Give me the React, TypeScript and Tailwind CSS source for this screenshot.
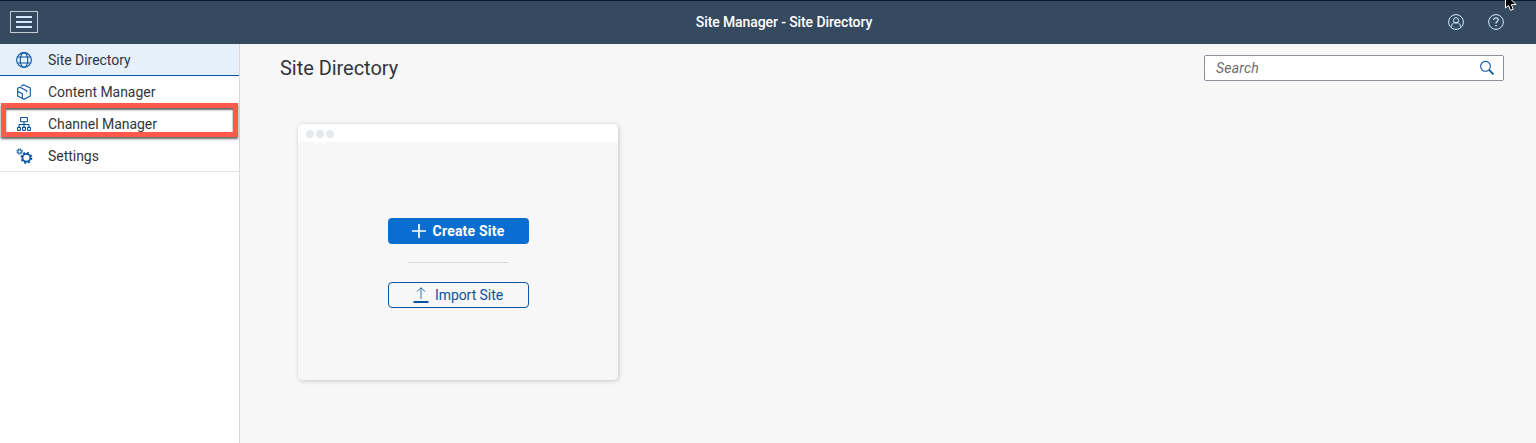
import type { ReactNode } from 'react';

function Globe() {
  return (
    <svg width="16" height="16" viewBox="0 0 16 16" fill="none" stroke="#0854a0" strokeWidth="1.1">
      <circle cx="8" cy="8" r="7.4" />
      <ellipse cx="8" cy="8" rx="3.8" ry="7.4" />
      <path d="M1.4 5h13.2M1.4 11h13.2" />
    </svg>
  );
}

function Cube() {
  return (
    <svg width="16" height="16" viewBox="0 0 16 16" fill="none" stroke="#0854a0" strokeWidth="1.1" strokeLinejoin="round" strokeLinecap="round">
      <path d="M5.4 1.9L7.6.8l6.7 3.3v7.8L8 15.3l-6.3-3.4V4.3l2.2-1.1 6.9 3.6v1.2" />
      <path d="M1.9 7.4L6.3 9.7v4.4" />
    </svg>
  );
}

function Hierarchy() {
  return (
    <svg width="16" height="16" viewBox="0 0 16 16" fill="none" stroke="#0854a0" strokeWidth="1.1">
      <rect x="4.6" y="1.5" width="6.8" height="4.2" rx=".5" />
      <path d="M8 5.7v5.6M3.1 11.3V8.5h9.8v2.8" />
      <rect x="1.5" y="11.4" width="3" height="3" rx=".6" />
      <rect x="6.5" y="11.4" width="3" height="3" rx=".6" />
      <rect x="11.5" y="11.4" width="3" height="3" rx=".6" />
    </svg>
  );
}

function Gears() {
  return (
    <svg width="17" height="16" viewBox="0 0 17 16" fill="none" stroke="#0854a0">
      <circle cx="3.6" cy="3.5" r="1.8" strokeWidth="1.1" />
      <circle cx="3.6" cy="3.5" r="2.7" strokeWidth="1.1" strokeDasharray="1.06 1.06" />
      <circle cx="10.4" cy="9.8" r="3.9" strokeWidth="1.7" />
      <circle cx="10.4" cy="9.8" r="5.2" strokeWidth="1.5" strokeDasharray="2.04 2.04" />
    </svg>
  );
}

function NavItem({ icon, label, className = 'h-8' }: { icon: ReactNode; label: string; className?: string }) {
  return (
    <a className={`flex items-center pl-4 text-sm tracking-[-0.03px] text-[#32363a] ${className}`}>
      <span className="w-8 shrink-0">{icon}</span>
      <span>{label}</span>
    </a>
  );
}

export default function App() {
  return (
    <div className="relative flex h-[443px] w-[1536px] flex-col overflow-hidden bg-[#f7f7f7] font-[Roboto,'Noto_Sans',sans-serif]">
      <header className="flex h-11 shrink-0 items-center border-t border-[#061a38] bg-[#354a5f] pr-8 pb-0.5 pl-2.5">
        <button className="flex h-[22px] w-7 items-center justify-center border border-[#c3cbd3]">
          <svg width="16" height="12" viewBox="0 0 16 12" fill="#d1e8ff">
            <path d="M0 0h16v2H0zM0 5h16v2H0zM0 10h16v2H0z" />
          </svg>
        </button>
        <h1 className="ml-[82px] flex-1 text-center text-sm font-medium tracking-[-0.1px] text-white">Site Manager - Site Directory</h1>
        <div className="flex gap-6">
          <svg width="16" height="16" viewBox="0 0 16 16" fill="none" stroke="#d1e8ff" strokeWidth="1">
            <circle cx="8" cy="8" r="7.4" />
            <circle cx="8" cy="6.3" r="2.6" />
            <path d="M3.7 12.6V12c0-1.9 1.2-3.1 3-3.1h2.6c1.8 0 3 1.2 3 3.1v.6" />
          </svg>
          <svg width="16" height="16" viewBox="0 0 16 16" fill="none" stroke="#d1e8ff" strokeWidth="1">
            <circle cx="8" cy="8" r="7.4" />
            <path d="M5.7 5.9c0-1.2.9-2 2.3-2s2.3.8 2.3 1.9c0 1.6-2.3 1.7-2.3 3.3v.5" strokeWidth="1.2" />
            <path d="M8 10.9v1.4" strokeWidth="1.4" />
          </svg>
        </div>
      </header>

      <div className="flex min-h-0 flex-1">
        <nav className="w-60 shrink-0 border-r border-[#d9d9d9] bg-white">
          <div className="border-b border-[#e5e5e5]">
            <NavItem icon={<Globe />} label="Site Directory" className="h-8 border-b border-[#0854a0] bg-[#e5f0fa]" />
            <NavItem icon={<Cube />} label="Content Manager" />
            <NavItem icon={<Hierarchy />} label="Channel Manager" />
            <NavItem icon={<Gears />} label="Settings" className="h-[31px]" />
          </div>
        </nav>

        <main className="flex-1 pr-8 pl-10">
          <div className="flex items-center justify-between pt-[11px]">
            <h2 className="text-xl leading-[26px] tracking-[-0.04px] text-[#32363a]">Site Directory</h2>
            <div className="flex h-[26px] w-[300px] items-center justify-between rounded-[2px] border border-[#89919a] bg-white pr-2 pl-[11px]">
              <span className="text-sm tracking-[0.2px] text-[#6a6d70] italic">Search</span>
              <svg width="16" height="16" viewBox="0 0 16 16" fill="none" stroke="#0854a0">
                <circle cx="6.5" cy="6.3" r="4.9" strokeWidth="1.1" />
                <path d="M10 9.8l4.5 4.5" strokeWidth="1.8" />
              </svg>
            </div>
          </div>

          <section className="mt-[43px] ml-[18px] flex h-64 w-80 flex-col overflow-hidden rounded-[5px] shadow-[0_0_2px_rgba(0,0,0,0.08),1px_1px_5px_rgba(0,0,0,0.18)]">
            <div className="flex h-[18px] items-center gap-0.5 bg-white pt-0.5 pl-2">
              <i className="size-2 rounded-full bg-[#e4e9ee]" />
              <i className="size-2 rounded-full bg-[#e4e9ee]" />
              <i className="size-2 rounded-full bg-[#e4e9ee]" />
            </div>
            <div className="flex flex-1 flex-col items-center bg-[#f7f7f7] pt-[76px]">
              <button className="flex h-[26px] w-[141px] items-center justify-center gap-[7px] rounded bg-[#0a6ed1] text-sm font-bold tracking-[0.2px] text-white">
                <svg width="14" height="14" viewBox="0 0 14 14" stroke="white" strokeWidth="1.7">
                  <path d="M7 0v14M0 7h14" />
                </svg>
                Create Site
              </button>
              <hr className="mt-[18px] w-[100px] border-t border-[#d9d9d9]" />
              <button className="mt-[19px] flex h-[26px] w-[141px] items-center justify-center gap-1.5 rounded border border-[#0854a0] text-sm tracking-[-0.06px] text-[#0854a0]">
                <svg width="16" height="16" viewBox="0 0 16 16" fill="none" stroke="#0854a0">
                  <path d="M8 12V.9M4 4.7L8 .7l4 4" strokeWidth=".8" />
                  <path d="M.5 15h15" strokeWidth="1.8" />
                </svg>
                Import Site
              </button>
            </div>
          </section>
        </main>
      </div>

      <div className="absolute top-[103px] left-[1px] h-[34px] w-[237px] border-[5px] border-[#ff594a] shadow-[0_2px_2px_rgba(0,0,0,0.6),inset_0_2px_2px_rgba(0,0,0,0.6)]" />
      <svg className="absolute top-0 left-[1504px]" width="15" height="12" viewBox="0 0 15 12">
        <path d="M1.5-6v14l3-2.5 2 4.9 2.8-1.2-2-4.7H12z" fill="black" stroke="white" strokeWidth="1" />
      </svg>
    </div>
  );
}
